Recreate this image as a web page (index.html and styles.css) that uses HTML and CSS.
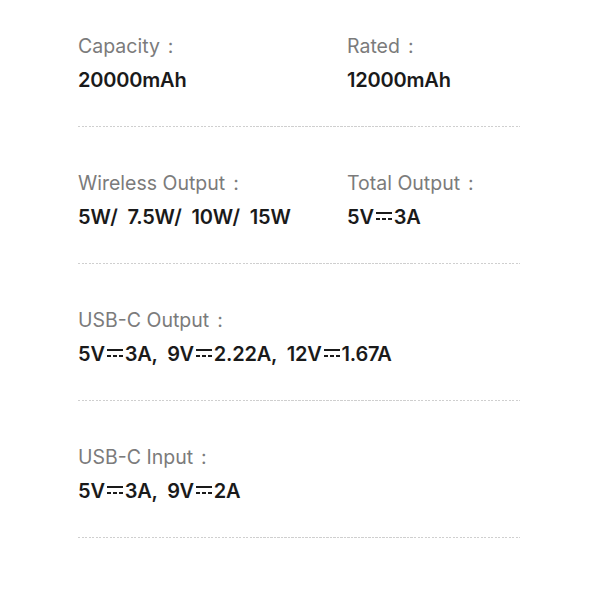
FILE: index.html
```html
<!DOCTYPE html>
<html lang="en">
<head>
    <meta charset="UTF-8">
    <meta name="viewport" content="width=device-width, initial-scale=1.0">
    <title>Power Bank Specs</title>
    <link rel="stylesheet" href="styles.css">
</head>
<body>
    <div class="specs">
        <div class="row">
            <div class="item">
                <p class="label">Capacity<span class="colon">:</span></p>
                <p class="value">20000mAh</p>
            </div>
            <div class="item">
                <p class="label">Rated<span class="colon">:</span></p>
                <p class="value">12000mAh</p>
            </div>
        </div>
        <div class="rule"></div>

        <div class="row">
            <div class="item">
                <p class="label">Wireless Output<span class="colon">:</span></p>
                <p class="value wide">5W/ 7.5W/ 10W/ 15W</p>
            </div>
            <div class="item">
                <p class="label">Total Output<span class="colon">:</span></p>
                <p class="value">5V<span class="dc"></span>3A</p>
            </div>
        </div>
        <div class="rule"></div>

        <div class="row">
            <div class="item">
                <p class="label">USB-C Output<span class="colon">:</span></p>
                <p class="value wide">5V<span class="dc"></span>3A, 9V<span class="dc"></span>2.22A, 12V<span class="dc"></span>1.67A</p>
            </div>
        </div>
        <div class="rule"></div>

        <div class="row">
            <div class="item">
                <p class="label">USB-C Input<span class="colon">:</span></p>
                <p class="value wide">5V<span class="dc"></span>3A, 9V<span class="dc"></span>2A</p>
            </div>
        </div>
        <div class="rule"></div>
    </div>
</body>
</html>
```

FILE: styles.css
```css
body{
    margin: 0;
    background-color: #ffffff;
    font-family: Inter, "Noto Sans", sans-serif;
}
.specs{
    width: 442px;
    margin-left: 78px;
    padding-top: 34px;
}
.row{
    display: grid;
    grid-template-columns: 269px 1fr;
}
.item{
    white-space: nowrap;
}
.label{
    margin: 0;
    font-size: 19.5px;
    line-height: 24px;
    color: #7b7b7b;
}
.colon{
    margin-left: 8px;
}
.value{
    margin: 8px 0 0 0;
    font-size: 20px;
    line-height: 28px;
    font-weight: 600;
    letter-spacing: -0.2px;
    color: #1a1a1a;
}
.wide{
    word-spacing: 5px;
}
.rule{
    height: 1px;
    margin: 32px 0 44px 0;
    background-image: repeating-linear-gradient(to right, #cfcfcf 0 2px, transparent 2px 3.5px);
}
.dc{
    display: inline-block;
    width: 16px;
    height: 8px;
    margin: 0 2px 0 2px;
    vertical-align: 4px;
    border-top: 2px solid #1a1a1a;
    box-sizing: border-box;
    background-image: repeating-linear-gradient(to right, #1a1a1a 0 4px, transparent 4px 6px);
    background-size: 100% 2px;
    background-repeat: no-repeat;
    background-position: left bottom;
}
```
